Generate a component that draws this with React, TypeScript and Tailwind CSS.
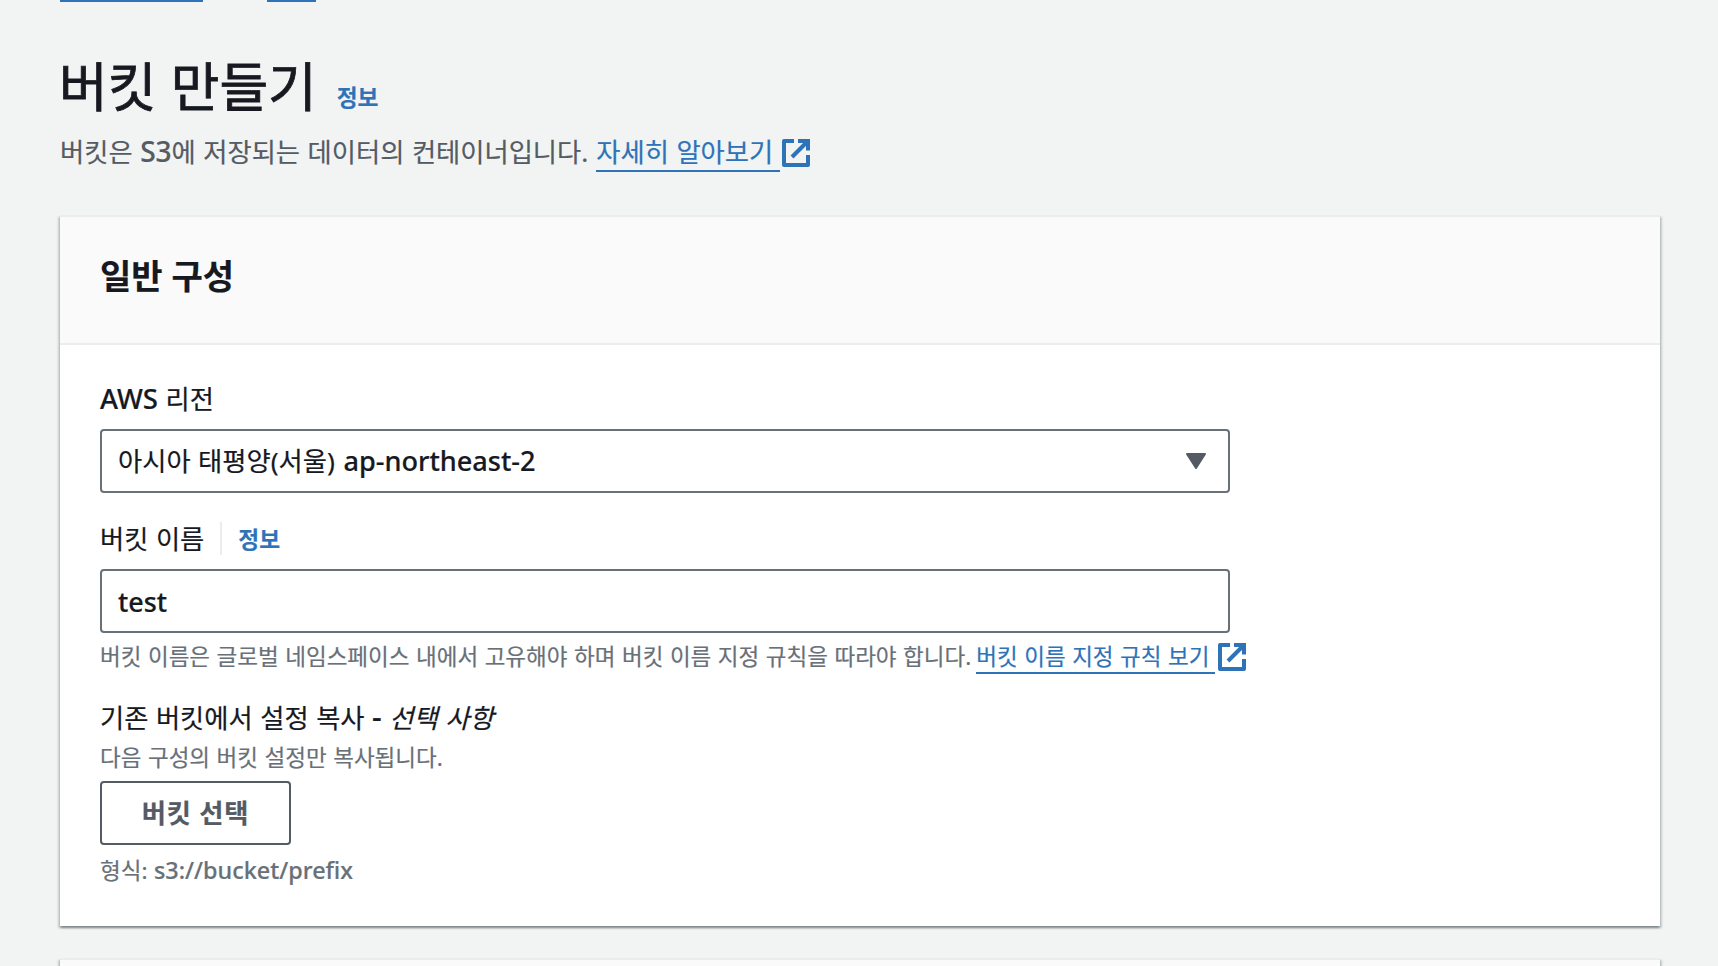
import React from 'react';

function ExternalIcon({ className = '' }: { className?: string }) {
  return (
    <svg viewBox="1 1 14 14" className={`w-7 h-7 shrink-0 ${className}`} fill="none" stroke="currentColor" strokeWidth="2">
      <path d="M7 2H2v12h12V9" strokeLinejoin="round" />
      <path d="M9 2h5v4.7" />
      <path d="M14 2L6 10" />
    </svg>
  );
}

function CaretDown() {
  return (
    <svg viewBox="0 0 20 16" className="w-5 h-4 shrink-0 text-[#545b64]" fill="currentColor" stroke="currentColor" strokeWidth="2" strokeLinejoin="round">
      <path d="M1 1h18l-9 14z" />
    </svg>
  );
}

export default function App() {
  return (
    <div className="w-[1718px] h-[966px] overflow-hidden bg-[#f2f3f3] px-[60px] text-[#16191f] text-[26.3px] leading-[44px] whitespace-nowrap [word-spacing:0.7px] [-webkit-text-stroke:0.2px] font-['Noto_Sans','Noto_Sans_CJK_KR',sans-serif]">
      {/* Breadcrumb links, scrolled almost out of view */}
      <nav className="flex h-0.5 gap-16">
        <a className="w-[143px] h-0.5 bg-[#2e73b8]" />
        <a className="w-[49px] h-0.5 bg-[#2e73b8]" />
      </nav>

      <header className="h-[213px]">
        <div className="flex h-[124px] pt-[44px]">
          <h1 className="-ml-px h-[80px] text-[52.9px] leading-[80px] [-webkit-text-stroke:0.8px]">버킷 만들기</h1>
          <a className="ml-5 mt-[30px] h-[44px] text-[22.7px] leading-[44px] font-bold text-[#2e73b8]">정보</a>
        </div>
        <div className="flex h-[46px] pt-[4px] text-[#545b64]">
          <p className="h-[44px]">버킷은 <span className="font-medium text-[28px] leading-none">S3</span>에 저장되는 데이터의 컨테이너입니다.</p>
          <a className="ml-2 flex h-[42px] text-[#2e73b8]">
            <span className="h-[42px] w-[184px] border-b-2 border-[#2e73b8]">자세히 알아보기</span>
            <ExternalIcon className="ml-0.5 mt-[9px]" />
          </a>
        </div>
      </header>

      <section className="h-[711px] w-[1600px] bg-white border-t-2 border-[#eaeded] shadow-[0_2px_2px_0_rgba(0,28,36,0.3),2px_2px_2px_0_rgba(0,28,36,0.15),-2px_2px_2px_0_rgba(0,28,36,0.15)]">
        <div className="h-[128px] px-10 pt-[37px] bg-[#fafafa] border-b-2 border-[#eaeded]">
          <h2 className="h-[44px] text-[34px] font-bold [word-spacing:0]">일반 구성</h2>
        </div>

        <div className="px-10 pt-[32px]">
          <label className="block h-[44px]"><span className="font-medium text-[27.5px] leading-none">AWS</span> 리전</label>
          <div className="mt-2 flex h-16 w-[1130px] items-center justify-between rounded border-2 border-[#687078] pl-4 pr-[22px]">
            <span className="h-[45px]">아시아 태평양(서울) <span className="ml-px font-medium text-[27.1px] leading-none">ap-northeast-2</span></span>
            <CaretDown />
          </div>

          <div className="mt-6 flex h-[44px]">
            <label>버킷 이름</label>
            <span className="ml-4 mt-[5px] h-[33px] w-0.5 bg-[#eaeded]" />
            <a className="ml-4 mt-px text-[22.7px] font-bold text-[#2e73b8]">정보</a>
          </div>
          <div className="mt-2 flex h-16 w-[1130px] items-center rounded border-2 border-[#687078] px-4">
            <span className="h-[42px] font-medium text-[26.9px]">test</span>
          </div>
          <div className="mt-1 flex h-[40px] text-[22.5px] leading-[40px] text-[#687078]">
            <p>버킷 이름은 글로벌 네임스페이스 내에서 고유해야 하며 버킷 이름 지정 규칙을 따라야 합니다.</p>
            <a className="ml-[5px] flex text-[#2e73b8]">
              <span className="h-[37px] w-[239px] border-b-2 border-[#2e73b8]">버킷 이름 지정 규칙 보기</span>
              <ExternalIcon className="ml-[3px] mt-[6px]" />
            </a>
          </div>

          <div className="mt-[19px] h-[44px]">
            기존 버킷에서 설정 복사 <span className="font-medium text-[30px] leading-none">-</span> <i>선택 사항</i>
          </div>
          <p className="-mt-0.5 h-[43px] text-[22.5px] leading-[40px] text-[#687078]">다음 구성의 버킷 설정만 복사됩니다.</p>
          <button className="flex h-16 w-[191px] items-center justify-center rounded border-2 border-[#545b64] font-bold text-[#545b64]">
            <span className="h-[45px] tracking-[0.8px]">버킷 선택</span>
          </button>
          <p className="mt-[6px] h-[40px] text-[22.5px] leading-[40px] text-[#687078]">형식: <span className="font-medium text-[23.4px] leading-none">s3://bucket/prefix</span></p>
        </div>
      </section>

      <section className="mt-8 h-20 w-[1600px] bg-[#fafafa] border-t-2 border-[#eaeded] shadow-[0_2px_2px_0_rgba(0,28,36,0.3),2px_2px_2px_0_rgba(0,28,36,0.15),-2px_2px_2px_0_rgba(0,28,36,0.15)]" />
    </div>
  );
}
